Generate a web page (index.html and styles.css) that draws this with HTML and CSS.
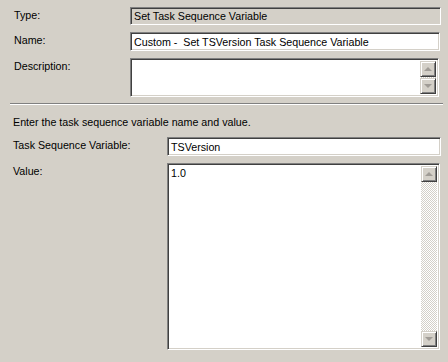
FILE: index.html
```html
<!DOCTYPE html>
<html lang="en">
<head>
  <meta charset="UTF-8">
  <title>Set Task Sequence Variable</title>
  <link rel="stylesheet" href="styles.css">
</head>
<body>
  <div class="page">
    <!-- General properties -->
    <div class="props">
      <div class="row row-type">
        <span class="label">Type:</span>
        <div class="edit readonly">Set Task Sequence Variable</div>
      </div>
      <div class="row row-name">
        <span class="label">Name:</span>
        <div class="edit">Custom -&nbsp; Set TSVersion Task Sequence Variable</div>
      </div>
      <div class="row row-desc">
        <span class="label">Description:</span>
        <div class="edit multi desc">
          <div class="text"></div>
          <div class="scrollbar">
            <div class="sb-btn"><span class="arrow up"></span></div>
            <div class="sb-track"></div>
            <div class="sb-btn"><span class="arrow down"></span></div>
          </div>
        </div>
      </div>
    </div>

    <div class="separator"></div>

    <!-- Variable settings -->
    <div class="settings">
      <p class="intro">Enter the task sequence variable name and value.</p>
      <div class="row row-var">
        <span class="label wide">Task Sequence Variable:</span>
        <div class="edit">TSVersion</div>
      </div>
      <div class="row row-value">
        <span class="label wide">Value:</span>
        <div class="edit multi value">
          <div class="text">1.0</div>
          <div class="scrollbar">
            <div class="sb-btn"><span class="arrow up"></span></div>
            <div class="sb-track"></div>
            <div class="sb-btn"><span class="arrow down"></span></div>
          </div>
        </div>
      </div>
    </div>
  </div>
</body>
</html>
```

FILE: styles.css
```css
body {
  margin: 0;
  background-color: #d4d0c8;
  font-family: "Liberation Sans", Arial, sans-serif;
  font-size: 10.7px;
  line-height: 13px;
  color: #000;
}

.page {
  width: 448px;
  height: 362px;
  overflow: hidden;
}

.props {
  padding: 7px 7px 0 14px;
}

.row {
  display: flex;
  align-items: flex-start;
}

.label {
  width: 116px;
  flex-shrink: 0;
  padding-top: 2px;
}

.label.wide {
  width: 154px;
}

/* sunken edit box */
.edit {
  flex: 1;
  height: 19px;
  box-sizing: border-box;
  background-color: #fff;
  border-top: 1px solid #808080;
  border-left: 1px solid #808080;
  border-right: 1px solid #fff;
  border-bottom: 1px solid #fff;
  box-shadow: inset 1px 1px 0 #404040, inset -1px -1px 0 #d4d0c8;
  padding: 3px 3px 0 3px;
  white-space: nowrap;
  overflow: hidden;
}

.edit.readonly {
  background-color: #d4d0c8;
}

.row-type .edit {
  height: 18px;
  padding-top: 2px;
}

.row-name {
  margin-top: 7px;
}

.row-name .edit {
  margin-right: 1px;
}

.row-desc {
  margin-top: 7px;
}

.edit.multi {
  display: flex;
  padding: 2px;
}

.edit.multi .text {
  flex: 1;
  padding: 1px 1px 0 1px;
}

.desc {
  height: 39px;
  margin-right: 2px;
}

.scrollbar {
  width: 16px;
  display: flex;
  flex-direction: column;
}

.sb-track {
  flex: 1;
  background-color: #fff;
  background-image: repeating-conic-gradient(#d4d0c8 0 25%, #fff 0 50%);
  background-size: 2px 2px;
}

.sb-btn {
  height: 16px;
  box-sizing: border-box;
  background-color: #d4d0c8;
  border-top: 1px solid #d4d0c8;
  border-left: 1px solid #d4d0c8;
  border-right: 1px solid #404040;
  border-bottom: 1px solid #404040;
  box-shadow: inset 1px 1px 0 #fff, inset -1px -1px 0 #808080;
  display: flex;
  align-items: center;
  justify-content: center;
}

.arrow {
  width: 0;
  height: 0;
  border-left: 4px solid transparent;
  border-right: 4px solid transparent;
}

.arrow.up {
  border-bottom: 4px solid #a09c96;
}

.arrow.down {
  border-top: 4px solid #a09c96;
}

.separator {
  margin: 6px 5px 0 10px;
  height: 0;
  border-top: 1px solid #808080;
  border-bottom: 1px solid #fff;
}

.settings {
  padding: 0 7px 0 13px;
}

.intro {
  margin: 11px 0 0 0;
}

.row-var {
  margin-top: 8px;
}

.row-value {
  margin-top: 7px;
}

.value {
  height: 187px;
  margin-right: 1px;
}
```
